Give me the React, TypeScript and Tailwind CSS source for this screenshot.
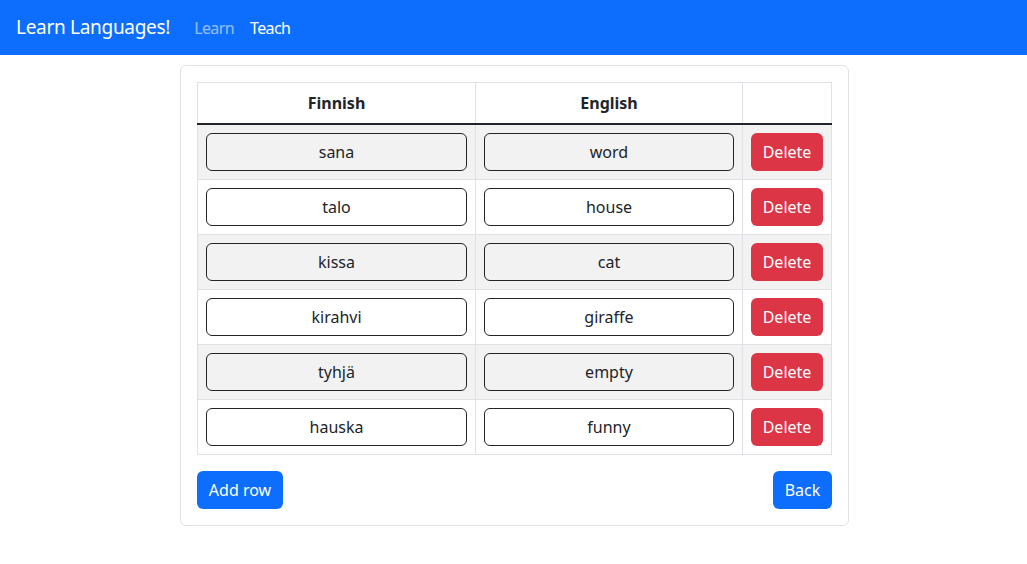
import React from 'react';

const words: [string, string][] = [
  ['sana', 'word'],
  ['talo', 'house'],
  ['kissa', 'cat'],
  ['kirahvi', 'giraffe'],
  ['tyhjä', 'empty'],
  ['hauska', 'funny'],
];

const App: React.FC = () => {
  return (
    <div className="min-h-screen bg-white text-[#212529] font-['Noto_Sans',sans-serif] text-base">
      <nav className="h-[55px] bg-[#0d6efd] flex items-center px-4">
        <span className="text-white text-[19px] tracking-[-0.3px] mr-4">Learn Languages!</span>
        <a className="px-2 text-white/55 tracking-[-0.6px] cursor-pointer">Learn</a>
        <a className="px-2 text-white tracking-[-0.6px] cursor-pointer">Teach</a>
      </nav>

      <div className="pl-[2px] pt-[10px]">
        <div className="w-[669px] mx-auto border border-[#dee2e6] rounded-md p-4">
          <table className="w-full border-collapse border border-[#dee2e6] mb-4">
            <thead>
              <tr className="border-b-2 border-b-[#212529]">
                <th className="w-[278px] h-[41px] border-x border-[#dee2e6] font-bold text-center">Finnish</th>
                <th className="w-[267px] border-x border-[#dee2e6] font-bold text-center">English</th>
                <th className="border-x border-[#dee2e6]"></th>
              </tr>
            </thead>
            <tbody>
              {words.map(([fi, en], i) => (
                <tr key={fi} className={`border-b border-[#dee2e6] ${i % 2 === 0 ? 'bg-[#f2f2f2]' : 'bg-white'}`}>
                  <td className="border-x border-[#dee2e6] p-2">
                    <input
                      defaultValue={fi}
                      className="w-full h-[38px] bg-transparent border border-[#212529] rounded-md text-center outline-none"
                    />
                  </td>
                  <td className="border-x border-[#dee2e6] p-2">
                    <input
                      defaultValue={en}
                      className="w-full h-[38px] bg-transparent border border-[#212529] rounded-md text-center outline-none"
                    />
                  </td>
                  <td className="border-x border-[#dee2e6] p-2">
                    <button className="h-[38px] w-[72px] bg-[#dc3545] text-white rounded-md">Delete</button>
                  </td>
                </tr>
              ))}
            </tbody>
          </table>
          <div className="flex justify-between">
            <button className="h-[38px] w-[86px] bg-[#0d6efd] text-white rounded-md">Add row</button>
            <button className="h-[38px] w-[59px] bg-[#0d6efd] text-white rounded-md">Back</button>
          </div>
        </div>
      </div>
    </div>
  );
};

export default App;
